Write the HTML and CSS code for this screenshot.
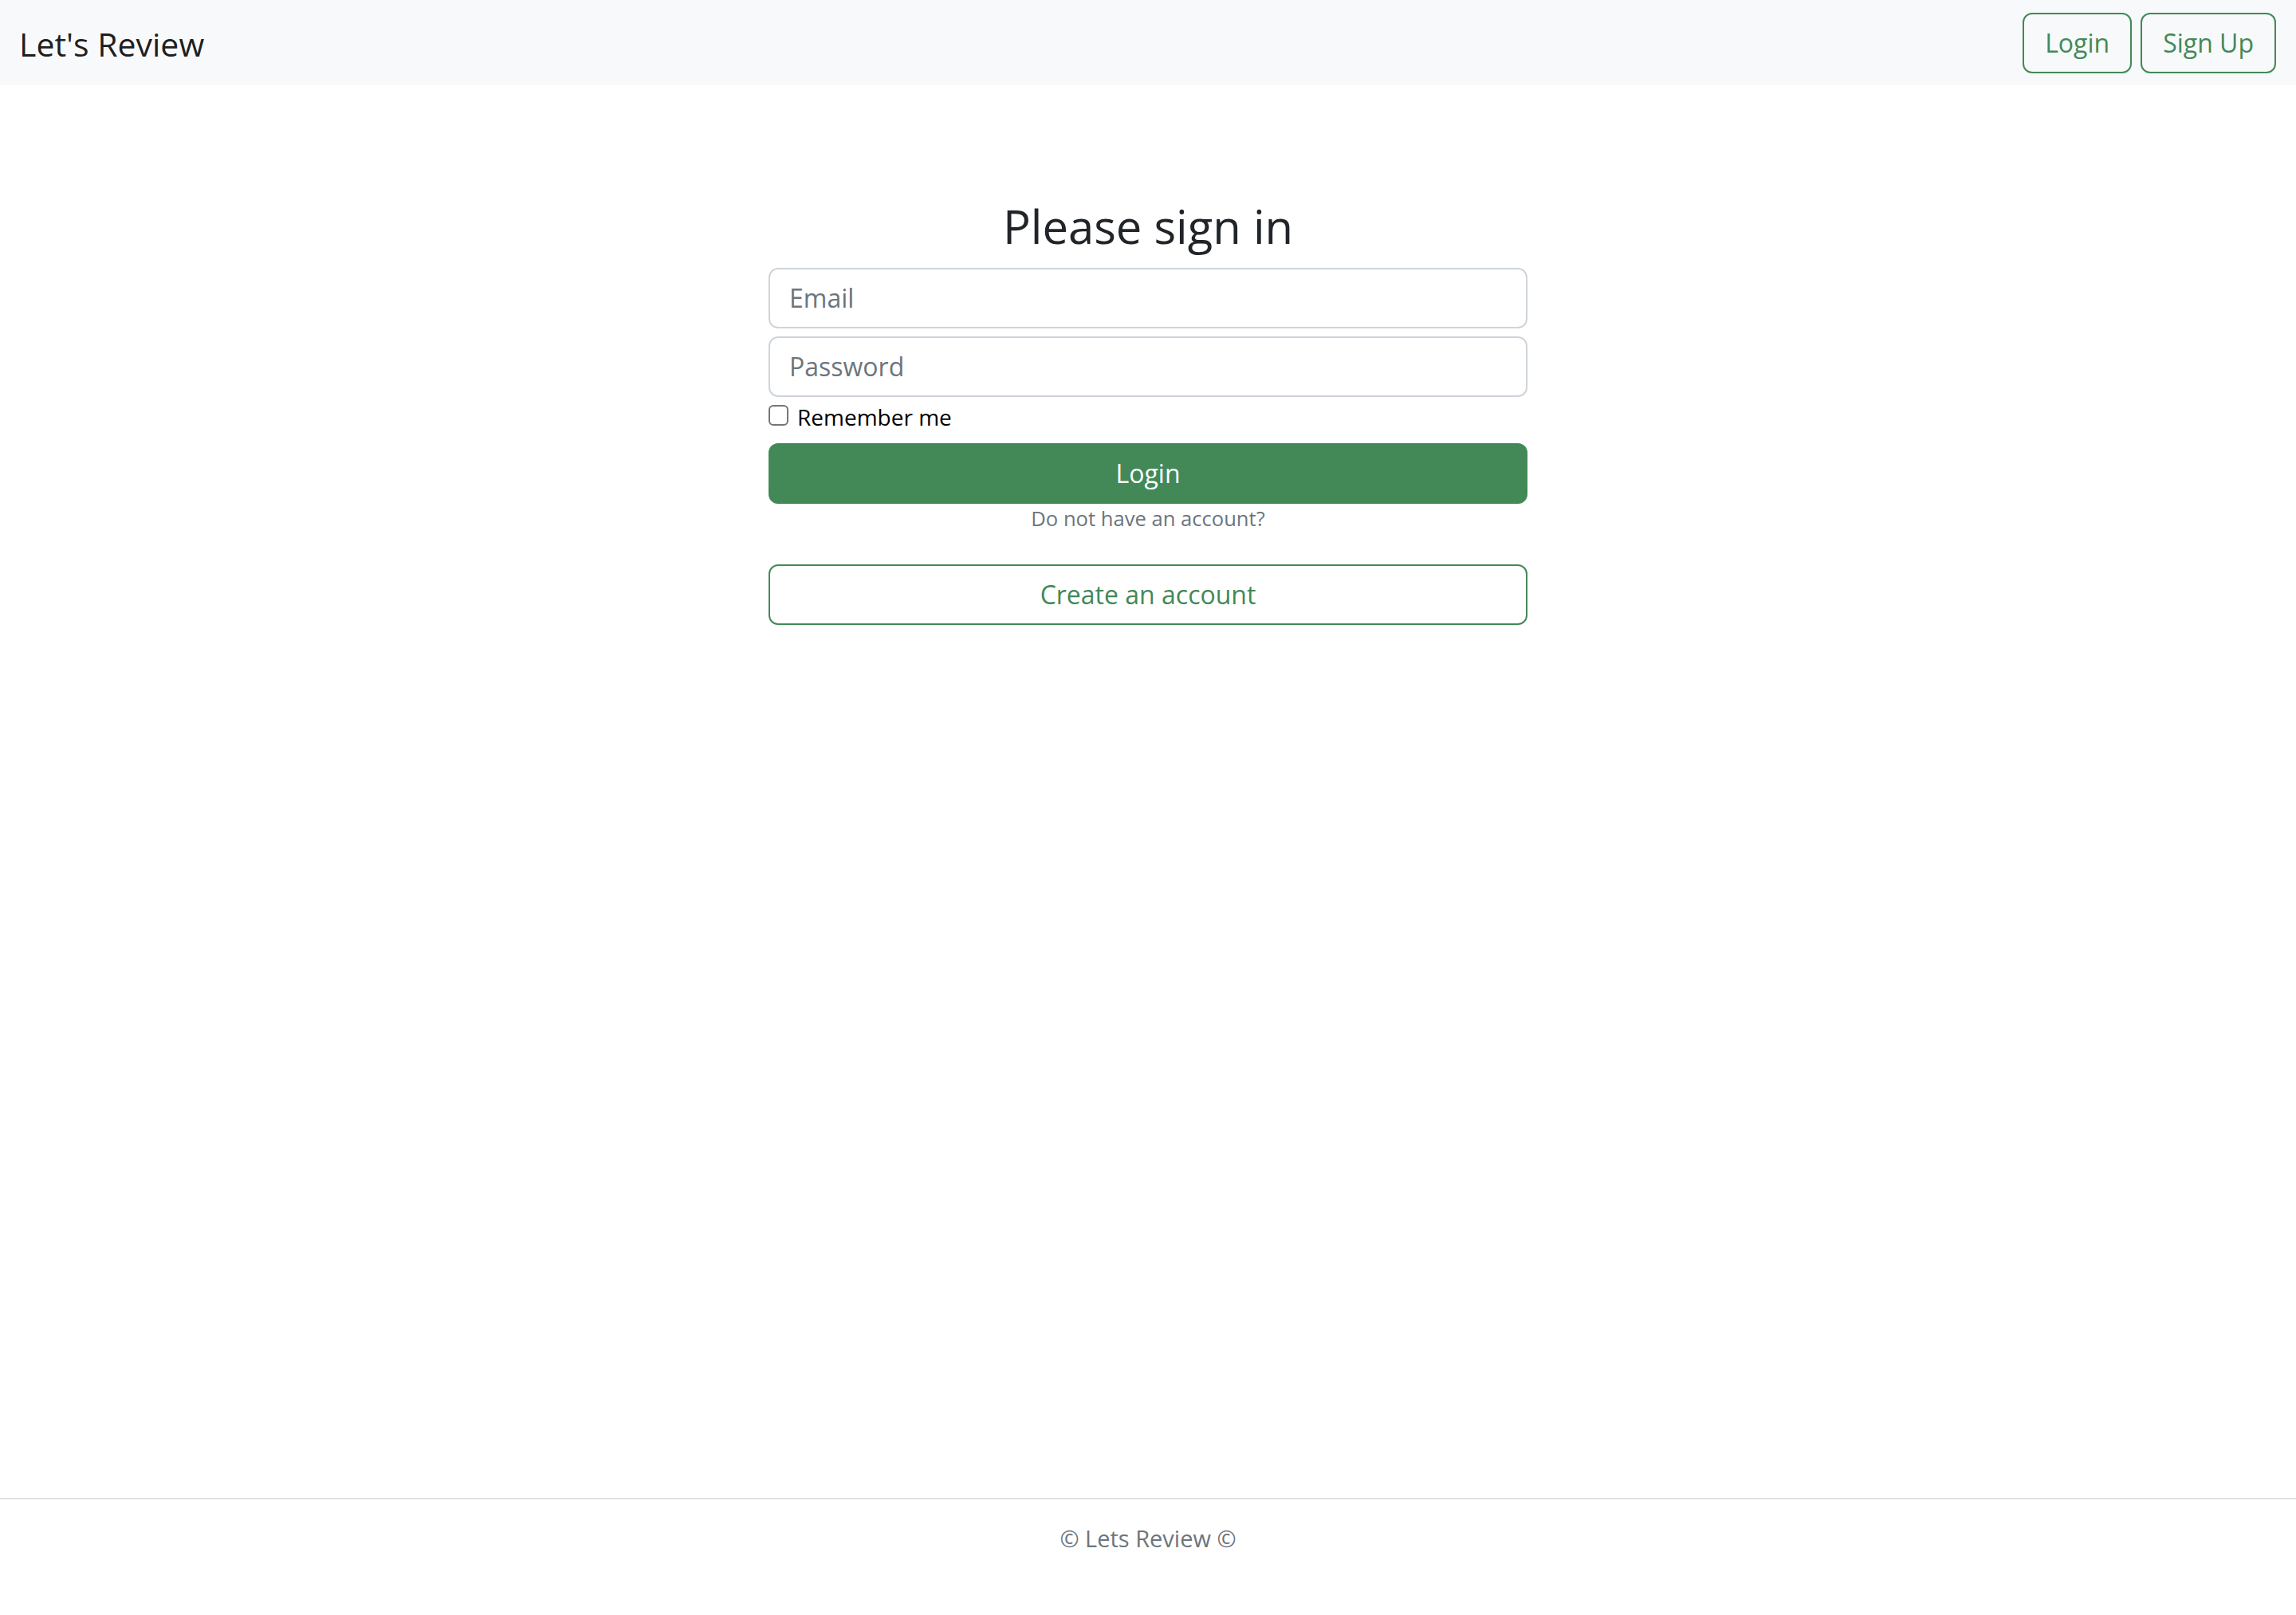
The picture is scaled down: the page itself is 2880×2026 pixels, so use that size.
FILE: index.html
```html
<!DOCTYPE html>
<html lang="en">
<head>
<meta charset="utf-8">
<title>Let's Review - Sign in</title>
<link rel="stylesheet" href="styles.css">
</head>
<body>
<nav class="navbar">
  <a class="brand" href="#">Let's Review</a>
  <div class="nav-actions">
    <a class="btn btn-outline" href="#">Login</a>
    <a class="btn btn-outline" href="#">Sign Up</a>
  </div>
</nav>
<main class="main">
  <form class="signin">
    <h1 class="title">Please sign in</h1>
    <input class="field" type="email" placeholder="Email">
    <input class="field field-gap" type="password" placeholder="Password">
    <label class="check"><input class="check-box" type="checkbox"><span>Remember me</span></label>
    <button class="btn btn-solid btn-block btn-login" type="button">Login</button>
    <p class="hint">Do not have an account?</p>
    <a class="btn btn-outline btn-block btn-create" href="#">Create an account</a>
  </form>
</main>
<footer class="footer">© Lets Review ©</footer>
</body>
</html>
```

FILE: styles.css
```css
* { box-sizing: border-box; }
html, body { margin: 0; padding: 0; }
body {
  font-family: "Open Sans", "Noto Sans", "DejaVu Sans", sans-serif;
  font-size: 32px;
  line-height: 1.5;
  color: #212529;
  background: #ffffff;
  min-height: 100vh;
  display: flex;
  flex-direction: column;
}
.navbar {
  display: flex;
  align-items: center;
  justify-content: space-between;
  background: #f8f9fa;
  height: 107px;
  padding: 0 25px 0 24px;
}
.brand {
  font-size: 41px;
  line-height: 60px;
  color: rgba(0, 0, 0, 0.9);
  text-decoration: none;
  padding-top: 3px;
}
.nav-actions { display: flex; gap: 11px; }
.btn {
  display: inline-block;
  font-family: inherit;
  font-size: 32px;
  line-height: 48px;
  padding: 12px 26px;
  border: 2px solid #428957;
  border-radius: 12px;
  text-decoration: none;
  text-align: center;
  cursor: pointer;
}
.btn-outline { color: #428957; background: transparent; }
.btn-solid { color: #ffffff; background: #428957; }
.btn-block { display: block; width: 100%; }
.main { flex: 1; display: flex; justify-content: center; }
.signin { width: 952px; display: flex; flex-direction: column; }
.title {
  margin: 142px 0 17px;
  font-size: 58px;
  line-height: 1.2;
  font-weight: 400;
  text-align: center;
}
.field {
  display: block;
  width: 100%;
  height: 76px;
  font-family: inherit;
  font-size: 32px;
  padding: 12px 24px;
  border: 2px solid #ced4da;
  border-radius: 12px;
  color: #212529;
  background: #fff;
}
.field::placeholder { color: #6c757d; }
.field-gap { margin-top: 10px; }
.check {
  display: flex;
  align-items: center;
  gap: 11px;
  margin-top: 4px;
  font-size: 28px;
  line-height: 42px;
  color: #000;
}
.check-box {
  appearance: none;
  -webkit-appearance: none;
  margin: 0;
  width: 25px;
  height: 26px;
  border: 2px solid #767676;
  border-radius: 6px;
  background: #fff;
  position: relative;
  top: -2px;
}
.btn-login { margin-top: 12px; }
.hint {
  margin: 0;
  font-size: 25.6px;
  line-height: 38.4px;
  color: #6c757d;
  text-align: center;
}
.btn-create { margin-top: 38px; }
.footer {
  border-top: 2px solid #dee2e6;
  padding: 27px 0 75px;
  font-size: 29px;
  line-height: 43.5px;
  color: #6c757d;
  text-align: center;
}
```
